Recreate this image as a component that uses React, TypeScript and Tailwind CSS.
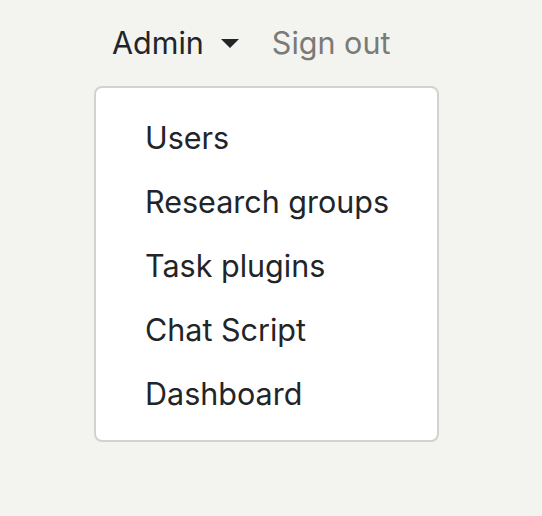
const items = ['Users', 'Research groups', 'Task plugins', 'Chat Script', 'Dashboard'];

export default function App() {
  return (
    <div
      className="min-h-screen bg-[#f3f3ef] pt-[19px] pl-[94px] text-[30.5px] leading-[48px] text-[#212529]"
      style={{ fontFamily: 'Inter, "Noto Sans", sans-serif' }}
    >
      {/* nav */}
      <div className="flex items-center">
        <a className="ml-[18px] flex items-center">
          Admin
          <span className="ml-[17px] inline-block h-0 w-0 border-x-[9px] border-t-[9px] border-x-transparent border-t-[#212529]" />
        </a>
        <a className="ml-[33px] text-[#7a7a77]">Sign out</a>
      </div>

      {/* dropdown */}
      <div className="mt-[19px] w-[345px] rounded-[8px] border-2 border-[#d2d2cf] bg-white pt-[18px] pb-[14px]">
        {items.map((item) => (
          <div key={item} className="py-[8px] pl-[49px]">
            {item}
          </div>
        ))}
      </div>
    </div>
  );
}
